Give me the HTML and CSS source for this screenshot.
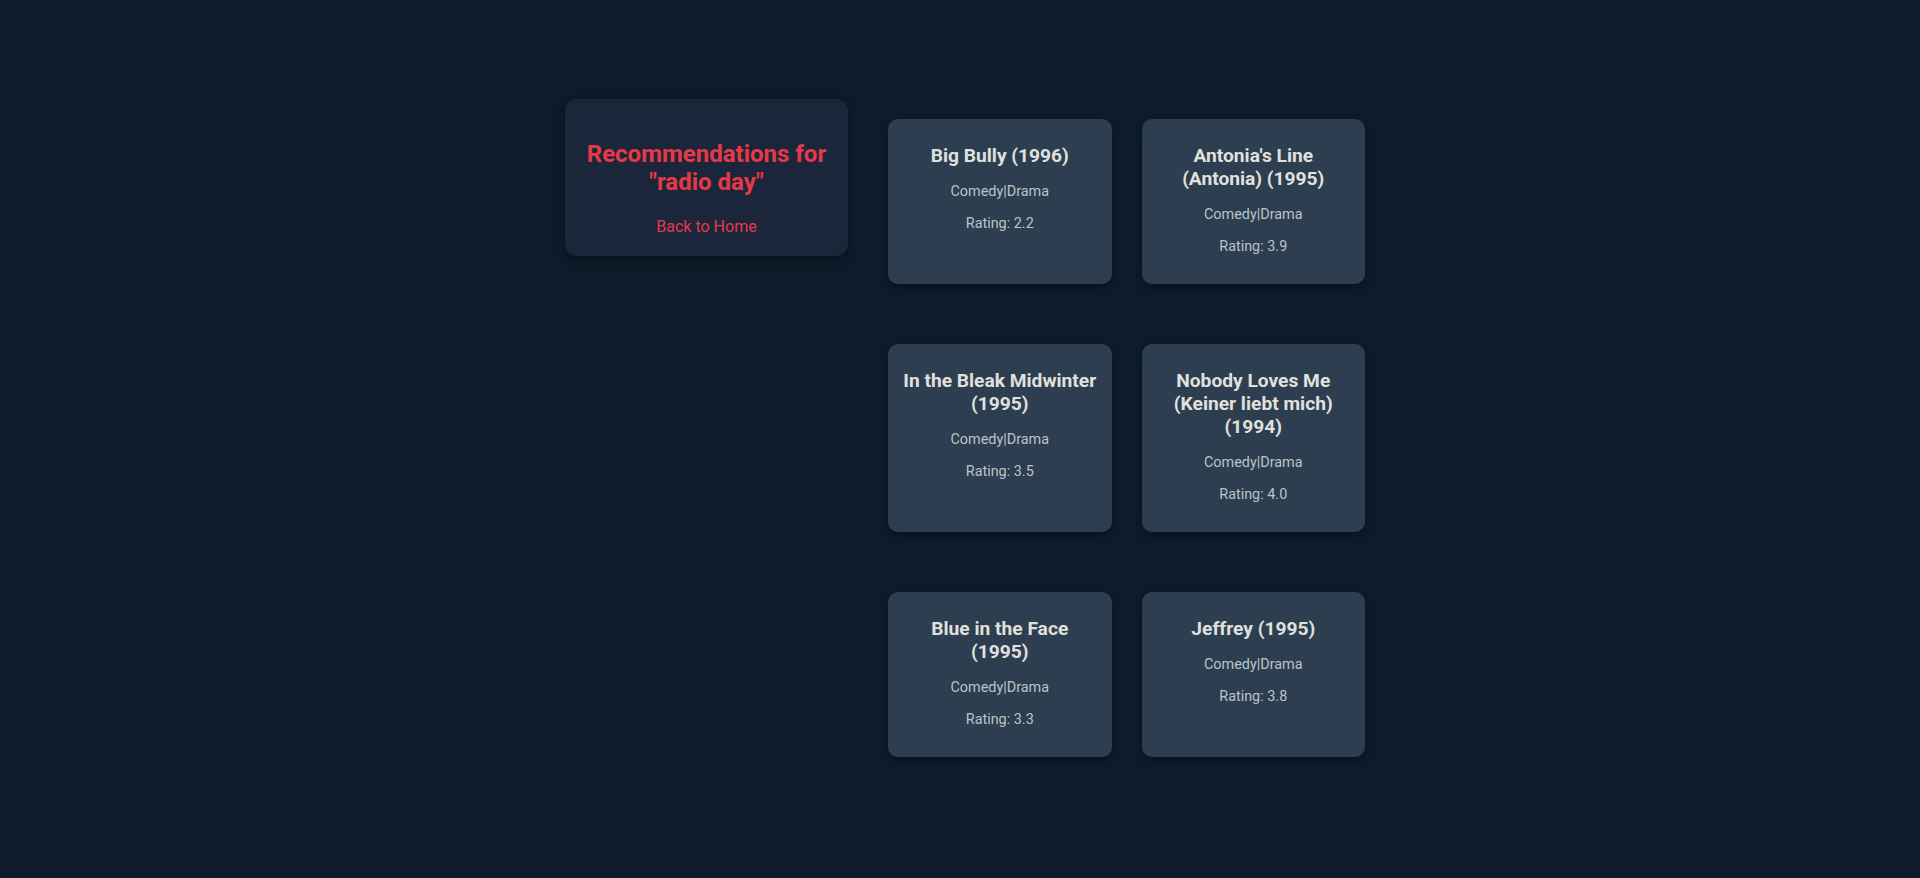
FILE: index.html
```html
<!DOCTYPE html>
<html lang="en">
<head>
<meta charset="utf-8">
<title>Recommendations</title>
<link rel="stylesheet" href="styles.css">
</head>
<body>
<main class="layout">
  <section class="intro">
    <h2 class="intro-title">Recommendations for "radio day"</h2>
    <a class="intro-link" href="#">Back to Home</a>
  </section>
  <section class="grid">
    <article class="card">
      <h3 class="card-title">Big Bully (1996)</h3>
      <p class="card-genre">Comedy|Drama</p>
      <p class="card-rating">Rating: 2.2</p>
    </article>
    <article class="card">
      <h3 class="card-title">Antonia's Line (Antonia) (1995)</h3>
      <p class="card-genre">Comedy|Drama</p>
      <p class="card-rating">Rating: 3.9</p>
    </article>
    <article class="card">
      <h3 class="card-title">In the Bleak Midwinter (1995)</h3>
      <p class="card-genre">Comedy|Drama</p>
      <p class="card-rating">Rating: 3.5</p>
    </article>
    <article class="card">
      <h3 class="card-title">Nobody Loves Me (Keiner liebt mich) (1994)</h3>
      <p class="card-genre">Comedy|Drama</p>
      <p class="card-rating">Rating: 4.0</p>
    </article>
    <article class="card">
      <h3 class="card-title">Blue in the Face (1995)</h3>
      <p class="card-genre">Comedy|Drama</p>
      <p class="card-rating">Rating: 3.3</p>
    </article>
    <article class="card">
      <h3 class="card-title">Jeffrey (1995)</h3>
      <p class="card-genre">Comedy|Drama</p>
      <p class="card-rating">Rating: 3.8</p>
    </article>
  </section>
</main>
</body>
</html>
```

FILE: styles.css
```css
* {
  box-sizing: border-box;
}

html, body {
  margin: 0;
  padding: 0;
}

body {
  background: #0d1b2a;
  font-family: Roboto, "Liberation Sans", sans-serif;
  min-height: 878px;
}

.layout {
  width: 810px;
  margin: 0 auto;
  padding: 99px 0 0 10px;
  display: flex;
  align-items: flex-start;
  gap: 40px;
}

.intro {
  width: 283px;
  flex: none;
  background: #1b263b;
  border-radius: 12px;
  padding: 20px 20px 19px;
  text-align: center;
  box-shadow: 0 4px 12px rgba(0, 0, 0, 0.35);
}

.intro-title {
  margin: 21px 0 20px;
  font-size: 24px;
  font-weight: 700;
  line-height: normal;
  color: #e63946;
}

.intro-link {
  display: inline-block;
  font-size: 16px;
  line-height: 21px;
  color: #e63946;
  text-decoration: none;
}

.grid {
  width: 477px;
  flex: none;
  margin-top: 20px;
  display: grid;
  grid-template-columns: 1fr 1fr;
  column-gap: 30px;
  row-gap: 60px;
}

.card {
  background: #2c3e50;
  border-radius: 10px;
  padding: 25px 14px 29px;
  text-align: center;
  box-shadow: 0 4px 10px rgba(0, 0, 0, 0.3);
}

.card-title {
  margin: 0 0 16px;
  font-size: 19.2px;
  line-height: 1.2;
  font-weight: 700;
  color: #e0e1dd;
}

.card-genre,
.card-rating {
  margin: 0;
  font-size: 14.4px;
  line-height: 17px;
  color: #bdc3c7;
}

.card-genre {
  margin-bottom: 15px;
}
```
